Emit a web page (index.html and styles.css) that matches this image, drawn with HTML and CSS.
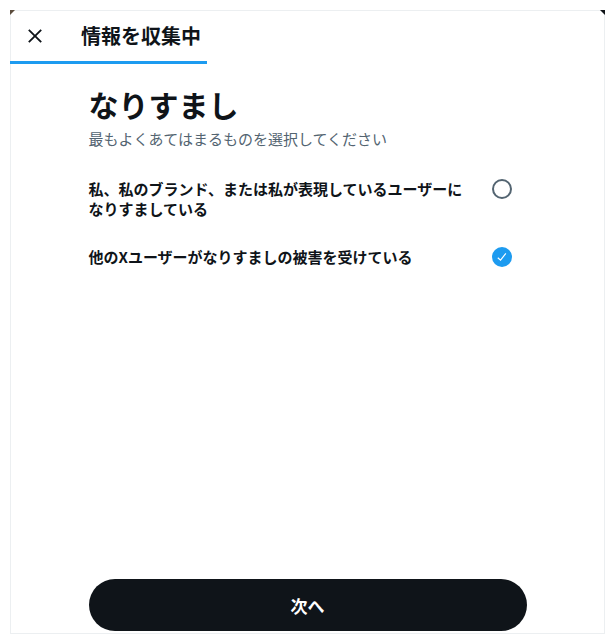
FILE: index.html
```html
<!DOCTYPE html>
<html lang="ja">
<head>
<meta charset="utf-8">
<title>情報を収集中</title>
<link rel="stylesheet" href="styles.css">
</head>
<body>
<div class="card">
  <header class="header">
    <button class="close" aria-label="閉じる">
      <svg viewBox="0 0 24 24" width="22" height="22"><path d="M10.59 12L4.54 5.96l1.42-1.42L12 10.59l6.04-6.05 1.42 1.42L13.41 12l6.05 6.04-1.42 1.42L12 13.41l-6.04 6.05-1.42-1.42L10.59 12z" fill="#0f1419"/></svg>
    </button>
    <h2 class="title">情報を収集中</h2>
  </header>
  <div class="progress"><div class="progress-fill"></div></div>
  <main class="content">
    <h1 class="heading">なりすまし</h1>
    <p class="subtitle">最もよくあてはまるものを選択してください</p>
    <div class="options">
      <label class="option">
        <span class="option-text">私、私のブランド、または私が表現しているユーザーになりすましている</span>
        <span class="radio-wrap"><span class="radio"></span></span>
      </label>
      <label class="option">
        <span class="option-text">他のXユーザーがなりすましの被害を受けている</span>
        <span class="radio-wrap">
          <span class="radio radio-checked">
            <svg viewBox="0 0 24 24" width="14" height="14"><path d="M9.64 18.952l-5.55-4.861 1.317-1.504 3.951 3.459 8.459-10.948L19.4 6.32 9.64 18.952z" fill="#fff"/></svg>
          </span>
        </span>
      </label>
    </div>
  </main>
  <footer class="footer">
    <button class="next">次へ</button>
  </footer>
</div>
</body>
</html>
```

FILE: styles.css
```css
* { box-sizing: border-box; }

html {
  margin: 0;
  padding: 0;
  background: #ffffff;
}

body {
  margin: 0;
  font-family: "Noto Sans CJK JP", "Noto Sans", sans-serif;
  color: #0f1419;
  padding: 10px 10px 9px 10px;
}

.card {
  position: relative;
  width: 595px;
  height: 624px;
  border: 1px solid #eceff1;
  background: #ffffff;
  display: flex;
  flex-direction: column;
}

.card::before,
.card::after {
  content: "";
  position: absolute;
  top: -1px;
  width: 5px;
  height: 5px;
}

.card::before {
  left: -1px;
  background: #5b4c3c;
  clip-path: polygon(0 0, 100% 0, 0 100%);
}

.card::after {
  right: -1px;
  background: #101418;
  clip-path: polygon(0 0, 100% 0, 100% 100%);
}

.header {
  height: 50px;
  display: flex;
  align-items: center;
  padding-left: 13px;
}

.close {
  width: 22px;
  height: 22px;
  padding: 0;
  border: 0;
  background: none;
  display: flex;
}

.title {
  margin: 0 0 0 35px;
  font-size: 20px;
  line-height: 24px;
  font-weight: 700;
}

.progress {
  height: 3px;
  margin-left: -1px;
}

.progress-fill {
  width: 197px;
  height: 3px;
  background: #1d9bf0;
}

.content {
  flex: 1;
  width: 438px;
  margin: 0 auto;
}

.heading {
  margin: 22px 0 0 0;
  font-size: 30px;
  line-height: 36px;
  font-weight: 700;
}

.subtitle {
  margin: 7px 0 0 0;
  font-size: 15px;
  line-height: 20px;
  color: #536471;
}

.options {
  margin-top: 30px;
  display: flex;
  flex-direction: column;
  gap: 28px;
}

.option {
  display: flex;
  align-items: flex-start;
}

.option-text {
  flex: 1;
  font-size: 15px;
  line-height: 20px;
  font-weight: 700;
}

.radio-wrap {
  width: 58px;
  display: flex;
  justify-content: flex-end;
  padding-right: 15px;
}

.radio {
  width: 20px;
  height: 20px;
  border: 2px solid #536471;
  border-radius: 50%;
  display: flex;
  align-items: center;
  justify-content: center;
}

.radio-checked {
  border: 0;
  background: #1d9bf0;
}

.footer {
  width: 438px;
  margin: 0 auto 2px auto;
}

.next {
  width: 100%;
  height: 52px;
  border: 0;
  border-radius: 26px;
  background: #0f1419;
  color: #ffffff;
  font-family: "Noto Sans CJK JP", "Noto Sans", sans-serif;
  font-size: 17px;
  font-weight: 700;
  display: flex;
  align-items: center;
  justify-content: center;
}
```
